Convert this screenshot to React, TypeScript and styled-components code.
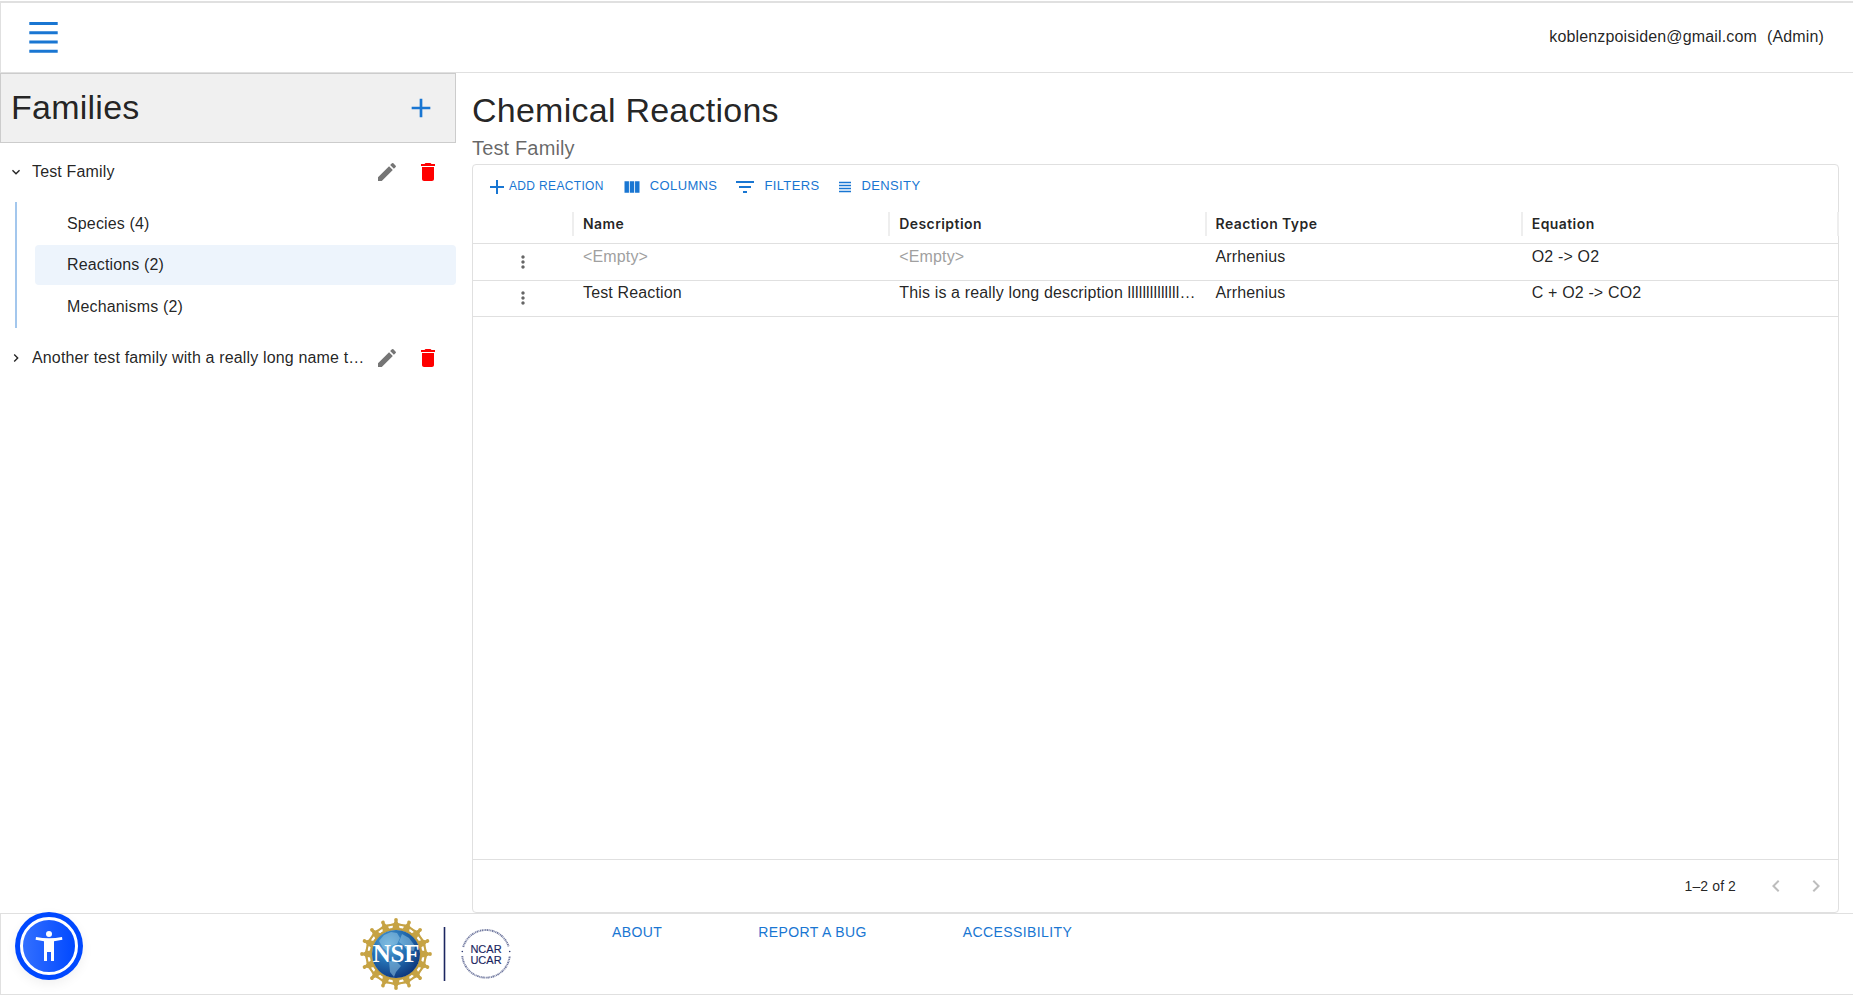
import React from "react";
import styled, { createGlobalStyle } from "styled-components";

const Global = createGlobalStyle`
  * { box-sizing: border-box; }
  body { margin: 0; background: #fff; color: rgba(0,0,0,.87); font: 16px/24px "Liberation Sans", Arial, sans-serif; letter-spacing: .15px; overflow: hidden; }
  svg { display: block; flex: none; }
`;

const Page = styled.div`
  display: flex;
  flex-direction: column;
  height: 995px;
  padding-top: 1px;
`;
const Header = styled.header`
  display: flex;
  justify-content: space-between;
  align-items: center;
  height: 72px;
  border: solid #e0e0e0;
  border-width: 2px 0 1px 1px;
  padding: 0 29px 2px 22px;
`;
const User = styled.div`
  display: flex;
  gap: 10px;
`;
const Body = styled.div`
  display: flex;
  height: 840px;
`;
const Sidebar = styled.aside`
  width: 456px;
`;
const FamiliesBar = styled.div`
  display: flex;
  justify-content: space-between;
  align-items: center;
  height: 70px;
  padding: 0 18px 2px 10px;
  border: 1px solid #ccc;
  background: #f0f0f0;
`;
const AddFamily = styled.span`
  padding-top: 2px;
  color: #1976d2;
`;
const Heading = styled.h1`
  margin: 0;
  font-size: 34px;
  line-height: 42px;
  font-weight: 400;
  letter-spacing: .00735em;
`;
const FamilyRow = styled.div<{ $top: number }>`
  display: flex;
  align-items: center;
  height: 24px;
  margin-top: ${(p) => p.$top}px;
  padding: 0 16px 0 8px;
`;
const FamilyName = styled.span`
  width: 337px;
  margin: 0 6px 0 8px;
  overflow: hidden;
  white-space: nowrap;
  text-overflow: ellipsis;
`;
const DeleteSlot = styled.span`
  margin-left: 17px;
`;
const Branch = styled.div`
  height: 126px;
  margin: 18px 0 0 15px;
  padding-left: 18px;
  border-left: 2px solid #a3c7ed;
`;
const Leaf = styled.div<{ $active?: boolean; $height: number }>`
  display: flex;
  align-items: center;
  height: ${(p) => p.$height}px;
  padding-left: 32px;
  border-radius: 4px;
  background: ${(p) => (p.$active ? "#edf4fc" : "transparent")};
`;
const Main = styled.main`
  width: 1367px;
  margin-left: 16px;
  padding-top: 16px;
`;
const Subtitle = styled.div`
  height: 33px;
  padding-top: 1px;
  color: rgba(0,0,0,.6);
  font-size: 20px;
  line-height: 32px;
  letter-spacing: .0075em;
`;
const Grid = styled.section`
  display: flex;
  flex-direction: column;
  height: 749px;
  border: 1px solid #e0e0e0;
  border-radius: 4px;
`;
const Toolbar = styled.div`
  display: flex;
  height: 43px;
  padding: 10px 0 0 12px;
  color: #1976d2;
`;
const Tool = styled.div<{ $gap: number; $after: number; $size?: number }>`
  display: flex;
  align-items: center;
  gap: ${(p) => p.$gap}px;
  height: 24px;
  margin-right: ${(p) => p.$after}px;
  font-size: ${(p) => p.$size ?? 13}px;
  line-height: 20px;
  letter-spacing: .02857em;
  white-space: nowrap;
`;
const ToolLabel = styled.span`
  padding-bottom: 2px;
`;
const HeadRow = styled.div`
  display: grid;
  grid-template-columns: 101px repeat(4, 316.25px);
  height: 36px;
  border-bottom: 1px solid #e0e0e0;
  font: 600 14px/23px Inter, sans-serif;
  letter-spacing: .03em;
`;
const HeadCell = styled.div`
  height: 24px;
  margin-top: 4px;
  padding-left: 9px;
  border-right: 2px solid #eee;
`;
const Row = styled.div<{ $height: number; $pad: number }>`
  display: grid;
  grid-template-columns: 101px repeat(4, 316.25px);
  height: ${(p) => p.$height}px;
  padding-top: ${(p) => p.$pad}px;
  border-bottom: 1px solid #e0e0e0;
`;
const Cell = styled.div<{ $muted?: boolean }>`
  padding: 0 10px 0 9px;
  overflow: hidden;
  white-space: nowrap;
  text-overflow: ellipsis;
  color: ${(p) => (p.$muted ? "#a0a0a0" : "inherit")};
`;
const MenuCell = styled.div`
  padding: 7px 0 0 40px;
`;
const Pager = styled.div`
  display: flex;
  align-items: center;
  justify-content: flex-end;
  height: 53px;
  margin-top: auto;
  padding-right: 10px;
  border-top: 1px solid #e0e0e0;
  font-size: 14px;
  letter-spacing: .1px;
  color: #bdbdbd;
`;
const PageCount = styled.span`
  margin-right: 28px;
  color: rgba(0,0,0,.87);
`;
const NextSlot = styled.span`
  margin-left: 16px;
`;
const Footer = styled.footer`
  display: flex;
  height: 82px;
  border: solid #e0e0e0;
  border-width: 1px 0 1px 1px;
`;
const AccessButton = styled.div`
  width: 68px;
  height: 68px;
  margin: -2px 0 0 14px;
  border-radius: 50%;
  box-shadow: 0 4px 12px rgba(0,0,0,.06);
`;
const Logos = styled.div`
  display: flex;
  align-items: center;
  width: 160px;
  margin-left: 277px;
`;
const Links = styled.nav`
  display: flex;
  gap: 96px;
  margin: 7px 0 0 92px;
  color: #1976d2;
  font-size: 14px;
  line-height: 22px;
  letter-spacing: .02857em;
`;

const Icon = ({ d, size = 24, color = "currentColor" }: { d: string; size?: number; color?: string }) => (
  <svg width={size} height={size} viewBox="0 0 24 24" fill={color}><path d={d} /></svg>
);
const EDIT = "M3 17.25V21h3.75L17.81 9.94l-3.75-3.75L3 17.25zM20.71 7.04c.39-.39.39-1.02 0-1.41l-2.34-2.34a.9959.9959 0 0 0-1.41 0l-1.83 1.83 3.75 3.75 1.83-1.83z";
const TRASH = "M6 19c0 1.1.9 2 2 2h8c1.1 0 2-.9 2-2V7H6v12zM19 4h-3.5l-1-1h-5l-1 1H5v2h14V4z";
const ADD = "M19 13h-6v6h-2v-6H5v-2h6V5h2v6h6v2z";
const DOWN = "M7.41 8.59 12 13.17l4.59-4.58L18 10l-6 6-6-6z";
const RIGHT = "M8.59 16.59 13.17 12 8.59 7.41 10 6l6 6-6 6z";
const LEFT = "M15.41 16.59 10.83 12l4.58-4.59L14 6l-6 6 6 6z";
const DOTS = "M12 8c1.1 0 2-.9 2-2s-.9-2-2-2-2 .9-2 2 .9 2 2 2zm0 2c-1.1 0-2 .9-2 2s.9 2 2 2 2-.9 2-2-.9-2-2-2zm0 6c-1.1 0-2 .9-2 2s.9 2 2 2 2-.9 2-2-.9-2-2-2z";
const COLUMNS = "M14.67 5v14H9.33V5h5.34zm1 14H21V5h-5.33v14zm-7.34 0V5H3v14h5.33z";
const FILTER = "M10 18h4v-2h-4v2zM3 6v2h18V6H3zm3 7h12v-2H6v2z";
const LINES = "M4 15h16v-2H4v2zm0 4h16v-2H4v2zm0-8h16V9H4v2zm0-6v2h16V5H4z";

const Family = ({ name, open, top }: { name: string; open?: boolean; top: number }) => (
  <FamilyRow $top={top}>
    <Icon d={open ? DOWN : RIGHT} size={16} />
    <FamilyName>{name}</FamilyName>
    <Icon d={EDIT} color="#757575" />
    <DeleteSlot><Icon d={TRASH} color="#f00" /></DeleteSlot>
  </FamilyRow>
);

const people = Array.from({ length: 16 }, (_, i) => i * 22.5);
const NsfLogo = () => (
  <svg width="72" height="74" viewBox="-36 -37 72 74">
    <defs>
      <radialGradient id="globe" cx=".35" cy=".3" r=".8">
        <stop offset="0" stopColor="#5fa9d8" /><stop offset=".45" stopColor="#2470b4" /><stop offset="1" stopColor="#0b2f74" />
      </radialGradient>
    </defs>
    <circle r="25" fill="none" stroke="#c19d3d" strokeWidth="2.4" />
    {people.map((a) => (
      <g key={a} transform={`rotate(${a})`} fill="#c6a344">
        <circle cy="-34" r="1.9" />
        <path d="M-1.3-33H1.3L2.2-31 6.4-29.8V-28L3-28.200 3.800-25H-3.800L-3-28.200-6.400-28V-29.800L-2.200-31Z" />
      </g>
    ))}
    <circle r="24" fill="url(#globe)" />
    <path d="M-5-22l6 1 3 5-3 6-6 2-3 6-5-4-4-7 5-6zM6-20l7 4 6 8-1 5-7-1-4-5-4-3zM-7 7l8 1 4 4-5 6-2 5-4-5z" fill="#9acbe8" opacity=".5" />
    <text y="8.2" textAnchor="middle" fill="#fff" fontFamily="Liberation Serif, serif" fontWeight="700" fontSize="25" letterSpacing="-.2">NSF</text>
  </svg>
);
const UcarLogo = () => (
  <svg width="52" height="52" viewBox="-26 -26 52 52">
    <g fill="none" stroke="#29356f" strokeWidth="1.9" strokeDasharray="1.5 .5 .8 .7 1.1 .6" opacity=".65">
      <path d="M-22.8-7A23.8 23.8 0 0 1 22.8-7" />
      <path d="M-23.7 2A23.8 23.8 0 0 0 23.7 2" />
    </g>
    <circle cx="-23.7" cy="-2.5" r=".8" fill="#29356f" /><circle cx="23.7" cy="-2.5" r=".8" fill="#29356f" />
    <g fill="#1b2560" stroke="#1b2560" strokeWidth=".15" fontFamily="Liberation Sans, sans-serif" fontSize="11" textAnchor="middle" letterSpacing="0">
      <text y="-1">NCAR</text><text y="10">UCAR</text>
    </g>
  </svg>
);
const AccessIcon = () => (
  <svg width="68" height="68" viewBox="0 0 68 68">
    <defs><linearGradient id="blue"><stop stopColor="#3470ff" /><stop offset="1" stopColor="#0048ff" /></linearGradient></defs>
    <circle cx="34" cy="34" r="34" fill="#0048ff" />
    <circle cx="34" cy="34" r="27.5" fill="url(#blue)" stroke="#fff" strokeWidth="3" />
    <circle cx="34" cy="22" r="3" fill="#fff" />
    <path d="M21 25q13 2.4 26 0l.4 2.8-8.4 1.5V49h-3v-9h-4v9h-3V29.3l-8.4-1.5z" fill="#fff" />
  </svg>
);

export default function App() {
  return (
    <Page>
      <Global />
      <Header>
        <svg width="44" height="45" viewBox="0 0 44 45" stroke="#1976d2" strokeWidth="3">
          <path d="M6.3 9.5H34.7M6.3 18.8H34.7M6.3 28H34.7M6.3 37.2H34.7" />
        </svg>
        <User><span>koblenzpoisiden@gmail.com</span><span>(Admin)</span></User>
      </Header>
      <Body>
        <Sidebar>
          <FamiliesBar><Heading>Families</Heading><AddFamily><Icon d={ADD} size={32} /></AddFamily></FamiliesBar>
          <Family name="Test Family" open top={17} />
          <Branch>
            <Leaf $height={43}>Species (4)</Leaf>
            <Leaf $height={40} $active>Reactions (2)</Leaf>
            <Leaf $height={43}>Mechanisms (2)</Leaf>
          </Branch>
          <Family name="Another test family with a really long name that overflows" top={18} />
        </Sidebar>
        <Main>
          <Heading>Chemical Reactions</Heading>
          <Subtitle>Test Family</Subtitle>
          <Grid>
            <Toolbar>
              <Tool $gap={0} $after={18} $size={12}><Icon d={ADD} /><ToolLabel>ADD REACTION</ToolLabel></Tool>
              <Tool $gap={8} $after={16}><Icon d={COLUMNS} size={20} /><ToolLabel>COLUMNS</ToolLabel></Tool>
              <Tool $gap={7} $after={16}><Icon d={FILTER} /><ToolLabel>FILTERS</ToolLabel></Tool>
              <Tool $gap={8} $after={0}><Icon d={LINES} size={18} /><ToolLabel>DENSITY</ToolLabel></Tool>
            </Toolbar>
            <HeadRow>
              <HeadCell /><HeadCell>Name</HeadCell><HeadCell>Description</HeadCell><HeadCell>Reaction Type</HeadCell><HeadCell>Equation</HeadCell>
            </HeadRow>
            <Row $height={37} $pad={1}>
              <MenuCell><Icon d={DOTS} size={20} color="#666" /></MenuCell>
              <Cell $muted>&lt;Empty&gt;</Cell><Cell $muted>&lt;Empty&gt;</Cell><Cell>Arrhenius</Cell><Cell>O2 -&gt; O2</Cell>
            </Row>
            <Row $height={36} $pad={0}>
              <MenuCell><Icon d={DOTS} size={20} color="#666" /></MenuCell>
              <Cell>Test Reaction</Cell><Cell>This is a really long description llllllllllllllllllllllll</Cell><Cell>Arrhenius</Cell><Cell>C + O2 -&gt; CO2</Cell>
            </Row>
            <Pager><PageCount>1–2 of 2</PageCount><Icon d={LEFT} /><NextSlot><Icon d={RIGHT} /></NextSlot></Pager>
          </Grid>
        </Main>
      </Body>
      <Footer>
        <AccessButton><AccessIcon /></AccessButton>
        <Logos>
          <NsfLogo />
          <svg width="28" height="54" viewBox="0 0 28 54"><path d="M12.5 0V54" stroke="#1b2560" strokeWidth="1.6" /></svg>
          <UcarLogo />
        </Logos>
        <Links><span>ABOUT</span><span>REPORT A BUG</span><span>ACCESSIBILITY</span></Links>
      </Footer>
    </Page>
  );
}
